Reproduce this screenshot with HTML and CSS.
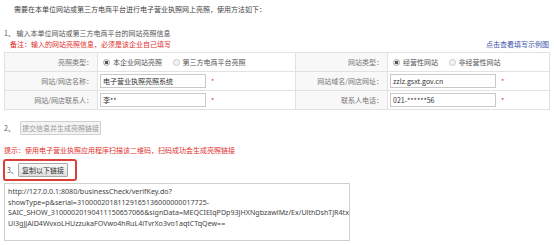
FILE: index.html
```html
<!DOCTYPE html>
<html lang="zh-CN">
<head>
  <meta charset="UTF-8" />
  <meta name="viewport" content="width=device-width, initial-scale=1.0"/>
  <title>网上亮照</title>
  <link rel="stylesheet" href="styles.css">
</head>
<body>
  <div class="page">
    <p class="intro">需要在本单位网站或第三方电商平台进行电子营业执照网上亮照，使用方法如下：</p>

    <p class="step">1、 输入本单位网站或第三方电商平台的网站亮照信息</p>
    <div class="note-row">
      <span class="note">备注：输入的网站亮照信息，必须是该企业自己填写</span>
      <a class="example" href="#">点击查看填写示例图</a>
    </div>

    <table class="info">
      <colgroup>
        <col class="c-label" />
        <col class="c-value" />
        <col class="c-label2" />
        <col />
      </colgroup>
      <tr>
        <td class="label">亮照类型：</td>
        <td>
          <span class="radio on"></span><span class="opt">本企业网站亮照</span>
          <span class="radio"></span><span class="opt">第三方电商平台亮照</span>
        </td>
        <td class="label">网站类型：</td>
        <td>
          <span class="radio on"></span><span class="opt">经营性网站</span>
          <span class="radio"></span><span class="opt">非经营性网站</span>
        </td>
      </tr>
      <tr>
        <td class="label">网站/网店名称：</td>
        <td><input class="field" type="text" value="电子营业执照亮照系统" /><span class="req">*</span></td>
        <td class="label">网站域名/网店网址：</td>
        <td><input class="field" type="text" value="zzlz.gsxt.gov.cn" /><span class="req">*</span></td>
      </tr>
      <tr>
        <td class="label">网站/网店联系人：</td>
        <td><input class="field" type="text" value="李**" /><span class="req">*</span></td>
        <td class="label">联系人电话：</td>
        <td><input class="field" type="text" value="021-******56" /><span class="req">*</span></td>
      </tr>
    </table>

    <div class="step2">
      <span>2、</span>
      <button class="btn btn-off" type="button">提交信息并生成亮照链接</button>
    </div>

    <p class="hint">提示：使用电子营业执照应用程序扫描该二维码，扫码成功会生成亮照链接</p>

    <div class="step3">
      <span>3、</span>
      <button class="btn btn-copy" type="button">复制以下链接</button>
    </div>

    <textarea class="link" readonly>http://127.0.0.1:8080/businessCheck/verifKey.do?
showType=p&amp;serial=31000020181129165136000000017725-
SAIC_SHOW_31000020190411150657066&amp;signData=MEQCIEIqPDp93JHXNgbzawlMz/Ex/UlthDshTjR4tx
Ui3gJJAlD4WvxoLHUzzukaFOVwo4hRuL4iTvrXo3vo1aqtCTqQew==</textarea>
  </div>
</body>
</html>
```

FILE: styles.css
```css
body {
    margin: 0;
    background: #ffffff;
    font-family: "Noto Sans CJK SC", "Noto Sans", sans-serif;
    font-size: 7px;
    color: #555;
}
.page {
    width: 546px;
    padding: 3px 4px 0 4px;
}
p {
    margin: 0;
}
.intro {
    margin-left: 10px;
    line-height: 12px;
    color: #444;
}
.step {
    margin-top: 12px;
    line-height: 12px;
    color: #555;
}
.note-row {
    display: flex;
    justify-content: space-between;
    line-height: 11px;
    padding-left: 6px;
}
.note {
    color: #e0302c;
}
.example {
    color: #3a4fa8;
    text-decoration: none;
    margin-right: 1px;
}
.info {
    margin-top: 2px;
    width: 546px;
    border-collapse: collapse;
    table-layout: fixed;
}
.c-label {
    width: 93px;
}
.c-value {
    width: 198px;
}
.c-label2 {
    width: 92px;
}
.info td {
    border: 1px solid #e2e2e2;
    height: 18px;
    padding: 0 0 0 2px;
    white-space: nowrap;
    color: #555;
}
.info td.label {
    background: #f8f8f8;
    text-align: right;
    padding: 0 4px 0 0;
    color: #777;
}
.radio {
    display: inline-block;
    width: 5px;
    height: 5px;
    border: 1px solid #c8c8c8;
    border-radius: 50%;
    background: #f4f4f4;
    vertical-align: -1px;
    margin: 0 3px 0 3px;
}
.radio.on {
    background: radial-gradient(circle, #555 0 1.6px, #eee 2px);
    border-color: #aaa;
}
.opt {
    margin-right: 6px;
}
.field {
    width: 106px;
    height: 14px;
    box-sizing: border-box;
    border: 1px solid #c9c9c9;
    padding: 0 2px;
    font-family: "Noto Sans CJK SC", "Noto Sans", sans-serif;
    font-size: 7px;
    color: #333;
    vertical-align: middle;
}
.req {
    color: #e0302c;
    margin-left: 5px;
    vertical-align: middle;
}
.btn {
    height: 14px;
    box-sizing: border-box;
    padding: 0 1px;
    font-family: "Noto Sans CJK SC", "Noto Sans", sans-serif;
    font-size: 7px;
    line-height: 12px;
    white-space: nowrap;
    border-radius: 1px;
    vertical-align: middle;
}
.step2 {
    margin-top: 11px;
    display: flex;
    align-items: center;
    height: 14px;
}
.step2 span {
    width: 16px;
}
.btn-off {
    color: #999;
    background: #f4f4f4;
    border: 1px solid #d0d0d0;
}
.hint {
    margin-top: 9px;
    line-height: 12px;
    color: #e0302c;
}
.step3 {
    margin-top: 3px;
    margin-left: -1px;
    width: 74px;
    height: 22px;
    box-sizing: border-box;
    border: 2px solid #d9403a;
    border-radius: 3px;
    display: flex;
    align-items: center;
    padding-left: 2px;
}
.step3 span {
    width: 11px;
    color: #555;
}
.btn-copy {
    width: 50px;
    color: #333;
    background: linear-gradient(#fafafa, #dedede);
    border: 1px solid #a8a8a8;
}
.link {
    display: block;
    margin-top: 2px;
    width: 346px;
    height: 58px;
    box-sizing: border-box;
    border: 1px solid #cfcfcf;
    padding: 2px 3px;
    resize: none;
    overflow: hidden;
    white-space: pre;
    font-family: "Noto Sans", sans-serif;
    font-size: 7.1px;
    line-height: 10.7px;
    color: #444;
}
```
